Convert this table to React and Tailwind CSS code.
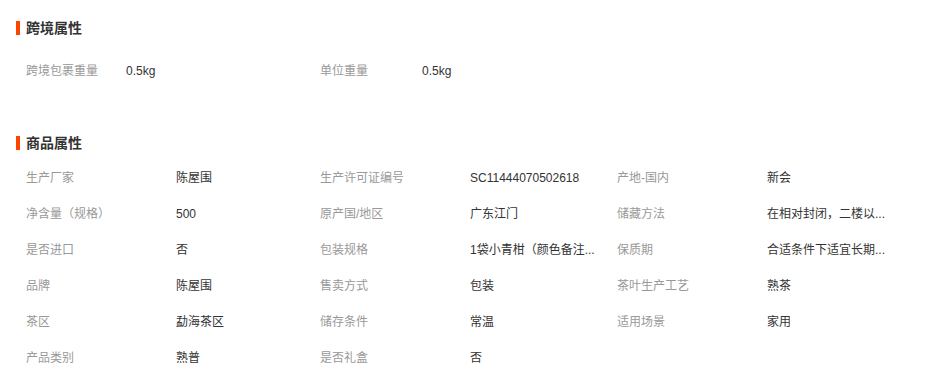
import React from 'react';

const crossBorder = [
	{ label: '跨境包裹重量', value: '0.5kg' },
	{ label: '单位重量', value: '0.5kg' },
];

const goods = [
	{ label: '生产厂家', value: '陈屋围' },
	{ label: '生产许可证编号', value: 'SC11444070502618' },
	{ label: '产地-国内', value: '新会' },
	{ label: '净含量（规格）', value: '500' },
	{ label: '原产国/地区', value: '广东江门' },
	{ label: '储藏方法', value: '在相对封闭，二楼以...' },
	{ label: '是否进口', value: '否' },
	{ label: '包装规格', value: '1袋小青柑（颜色备注...' },
	{ label: '保质期', value: '合适条件下适宜长期...' },
	{ label: '品牌', value: '陈屋围' },
	{ label: '售卖方式', value: '包装' },
	{ label: '茶叶生产工艺', value: '熟茶' },
	{ label: '茶区', value: '勐海茶区' },
	{ label: '储存条件', value: '常温' },
	{ label: '适用场景', value: '家用' },
	{ label: '产品类别', value: '熟普' },
	{ label: '是否礼盒', value: '否' },
];

function SectionTitle({ children }) {
	return (
		<div className="flex h-[20px] items-center pl-[16px]">
			<span className="h-[14px] w-[4px] bg-[#ff4400]" />
			<h2 className="ml-[6px] text-[14px] font-bold leading-[20px] text-[#333]">{children}</h2>
		</div>
	);
}

function Attr({ label, value, labelWidth }) {
	return (
		<div className="flex h-[36px] items-center text-[12px]">
			<span className={`shrink-0 text-[#999] ${labelWidth}`}>{label}</span>
			<span className="whitespace-nowrap text-[#333]">{value}</span>
		</div>
	);
}

export default function App() {
	return (
		<div
			className="h-[378px] w-[932px] overflow-hidden bg-white pt-[18px]"
			style={{ fontFamily: '"Liberation Sans", "Noto Sans CJK SC", sans-serif' }}
		>
			<SectionTitle>跨境属性</SectionTitle>
			<div className="mt-[15px] grid grid-cols-[294px_1fr] pl-[26px]">
				{crossBorder.map((a, i) => (
					<Attr key={a.label} {...a} labelWidth={i === 0 ? 'w-[100px]' : 'w-[102px]'} />
				))}
			</div>

			<div className="mt-[44px]">
				<SectionTitle>商品属性</SectionTitle>
			</div>
			<div className="mt-[7px] grid grid-cols-[294px_297px_1fr] pl-[26px]">
				{goods.map((a) => (
					<Attr key={a.label} {...a} labelWidth="w-[150px]" />
				))}
			</div>
		</div>
	);
}
